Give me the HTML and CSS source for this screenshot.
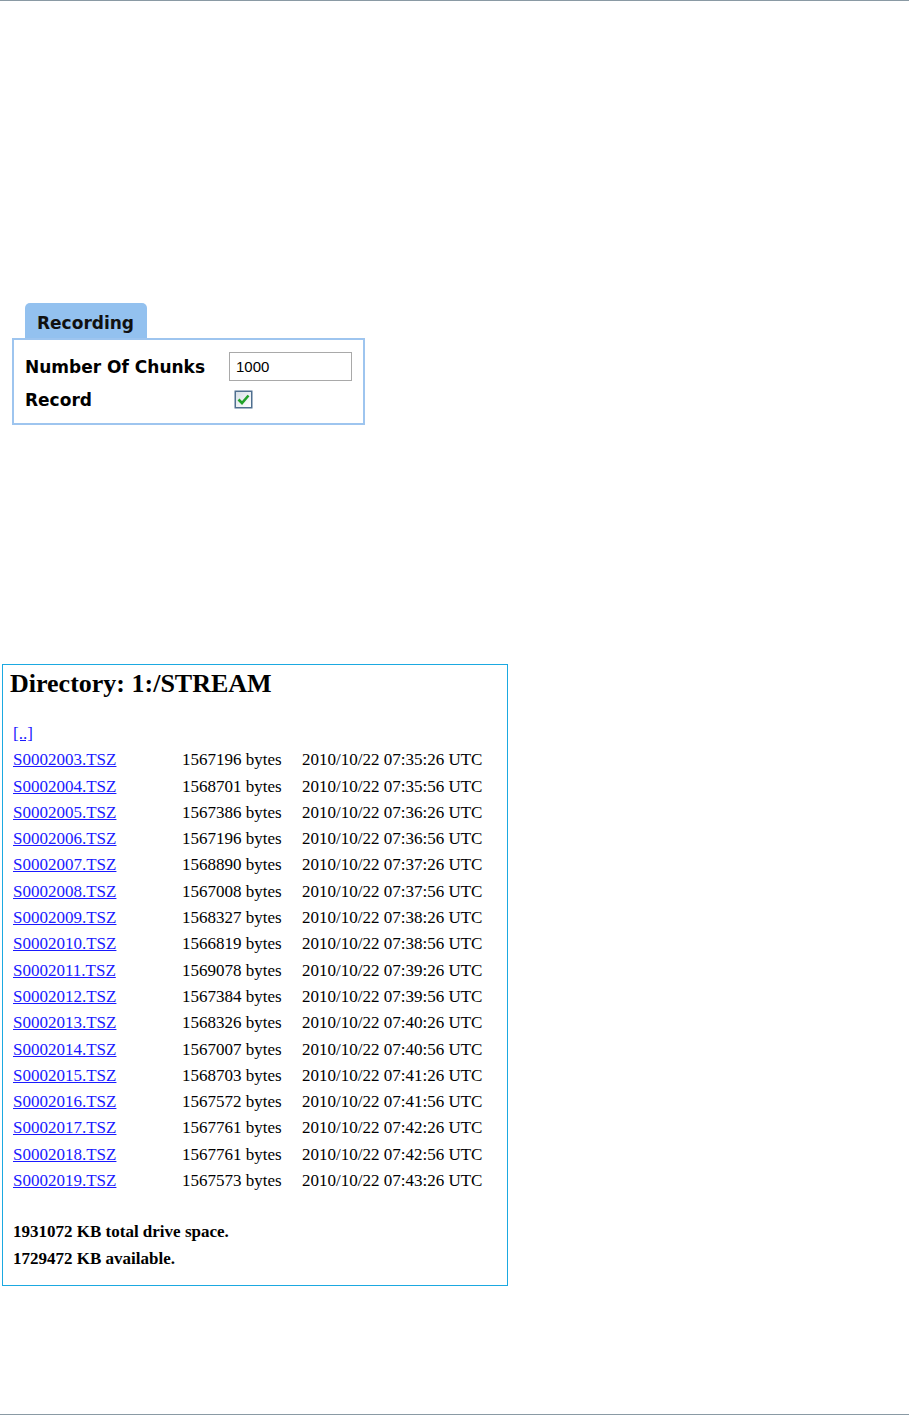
FILE: index.html
```html
<!DOCTYPE html>
<html lang="en">
<head>
    <meta charset="UTF-8">
    <meta name="viewport" content="width=device-width, initial-scale=1.0">
    <title>Directory: 1:/STREAM</title>
    <link rel="stylesheet" href="styles.css">
</head>
<body>
    <div class="page">
        <div class="settings">
            <div class="tab">Recording</div>
            <div class="panel">
                <div class="field">
                    <label for="chunks">Number Of Chunks</label>
                    <input type="text" id="chunks" value="1000">
                </div>
                <div class="field">
                    <label>Record</label>
                    <span class="check">
                        <svg width="19" height="19" viewBox="0 0 19 19">
                            <defs>
                                <linearGradient id="boxfill" x1="0" y1="0" x2="1" y2="1">
                                    <stop offset="0" stop-color="#d8e0e8"/>
                                    <stop offset="1" stop-color="#ffffff"/>
                                </linearGradient>
                            </defs>
                            <rect x="0.5" y="0.5" width="18" height="18" fill="#4f6f8f"/>
                            <rect x="2" y="2" width="15" height="15" fill="url(#boxfill)"/>
                            <path d="M4.5 9.5 L8 13 L14.5 5.5" fill="none" stroke="#22a22a" stroke-width="2.6"/>
                        </svg>
                    </span>
                </div>
            </div>
        </div>

        <div class="listing">
            <h1>Directory: 1:/STREAM</h1>
            <table class="files">
                <tr><td><a href="#">[..]</a></td><td></td><td></td></tr>
                <tr><td><a href="#">S0002003.TSZ</a></td><td>1567196 bytes</td><td>2010/10/22 07:35:26 UTC</td></tr>
                <tr><td><a href="#">S0002004.TSZ</a></td><td>1568701 bytes</td><td>2010/10/22 07:35:56 UTC</td></tr>
                <tr><td><a href="#">S0002005.TSZ</a></td><td>1567386 bytes</td><td>2010/10/22 07:36:26 UTC</td></tr>
                <tr><td><a href="#">S0002006.TSZ</a></td><td>1567196 bytes</td><td>2010/10/22 07:36:56 UTC</td></tr>
                <tr><td><a href="#">S0002007.TSZ</a></td><td>1568890 bytes</td><td>2010/10/22 07:37:26 UTC</td></tr>
                <tr><td><a href="#">S0002008.TSZ</a></td><td>1567008 bytes</td><td>2010/10/22 07:37:56 UTC</td></tr>
                <tr><td><a href="#">S0002009.TSZ</a></td><td>1568327 bytes</td><td>2010/10/22 07:38:26 UTC</td></tr>
                <tr><td><a href="#">S0002010.TSZ</a></td><td>1566819 bytes</td><td>2010/10/22 07:38:56 UTC</td></tr>
                <tr><td><a href="#">S0002011.TSZ</a></td><td>1569078 bytes</td><td>2010/10/22 07:39:26 UTC</td></tr>
                <tr><td><a href="#">S0002012.TSZ</a></td><td>1567384 bytes</td><td>2010/10/22 07:39:56 UTC</td></tr>
                <tr><td><a href="#">S0002013.TSZ</a></td><td>1568326 bytes</td><td>2010/10/22 07:40:26 UTC</td></tr>
                <tr><td><a href="#">S0002014.TSZ</a></td><td>1567007 bytes</td><td>2010/10/22 07:40:56 UTC</td></tr>
                <tr><td><a href="#">S0002015.TSZ</a></td><td>1568703 bytes</td><td>2010/10/22 07:41:26 UTC</td></tr>
                <tr><td><a href="#">S0002016.TSZ</a></td><td>1567572 bytes</td><td>2010/10/22 07:41:56 UTC</td></tr>
                <tr><td><a href="#">S0002017.TSZ</a></td><td>1567761 bytes</td><td>2010/10/22 07:42:26 UTC</td></tr>
                <tr><td><a href="#">S0002018.TSZ</a></td><td>1567761 bytes</td><td>2010/10/22 07:42:56 UTC</td></tr>
                <tr><td><a href="#">S0002019.TSZ</a></td><td>1567573 bytes</td><td>2010/10/22 07:43:26 UTC</td></tr>
            </table>
            <p class="space">1931072 KB total drive space.<br>1729472 KB available.</p>
        </div>
    </div>
</body>
</html>
```

FILE: styles.css
```css
body {
    margin: 0;
    padding: 0;
    background-color: #ffffff;
    color: #000000;
    font-family: "Liberation Serif", "Times New Roman", serif;
}
.page {
    height: 1415px;
    box-sizing: border-box;
    border-top: 1px solid #8a9aa4;
    border-bottom: 1px solid #8a9aa4;
    overflow: hidden;
}
.settings {
    margin: 302px 0 0 12px;
    width: 353px;
    font-family: "DejaVu Sans", Verdana, sans-serif;
    font-weight: bold;
    font-size: 17px;
}
.tab {
    margin-left: 13px;
    width: 110px;
    height: 29px;
    padding: 6px 0 0 12px;
    line-height: 29px;
    background-color: #93c1ef;
    border-radius: 5px 5px 0 0;
    color: #111111;
}
.panel {
    border: 2px solid #9ec5ef;
    padding: 12px 0 14px 11px;
    display: flex;
    flex-direction: column;
    gap: 9px;
}
.field {
    display: grid;
    grid-template-columns: 204px auto;
    align-items: center;
    line-height: 19px;
}
.field label {
    position: relative;
    top: 1px;
}
.field input {
    width: 123px;
    height: 29px;
    box-sizing: border-box;
    margin: 0;
    padding: 0 6px;
    border: 1px solid #a9a9a9;
    font-family: "Liberation Sans", Arial, sans-serif;
    font-size: 15px;
    color: #000000;
}
.check {
    display: block;
    width: 19px;
    height: 19px;
    margin-left: 5px;
}
.check svg {
    display: block;
}
.listing {
    margin: 239px 0 0 2px;
    width: 506px;
    height: 622px;
    box-sizing: border-box;
    border: 1px solid #1ba9e1;
    padding: 4px 0 0 7px;
}
.listing h1 {
    margin: 0;
    font-size: 26px;
    line-height: 30px;
    font-weight: bold;
}
.files {
    margin-top: 22px;
    margin-left: 3px;
    border-collapse: collapse;
    font-size: 17px;
}
.files td {
    padding: 0;
    height: 26.3px;
    line-height: 26.3px;
    white-space: nowrap;
    vertical-align: top;
}
.files td:nth-child(1) {
    width: 169px;
}
.files td:nth-child(2) {
    width: 120px;
}
.files a {
    color: #1a1aff;
}
.space {
    margin: 25px 0 0 3px;
    font-size: 17px;
    font-weight: bold;
    line-height: 26.5px;
}
```
